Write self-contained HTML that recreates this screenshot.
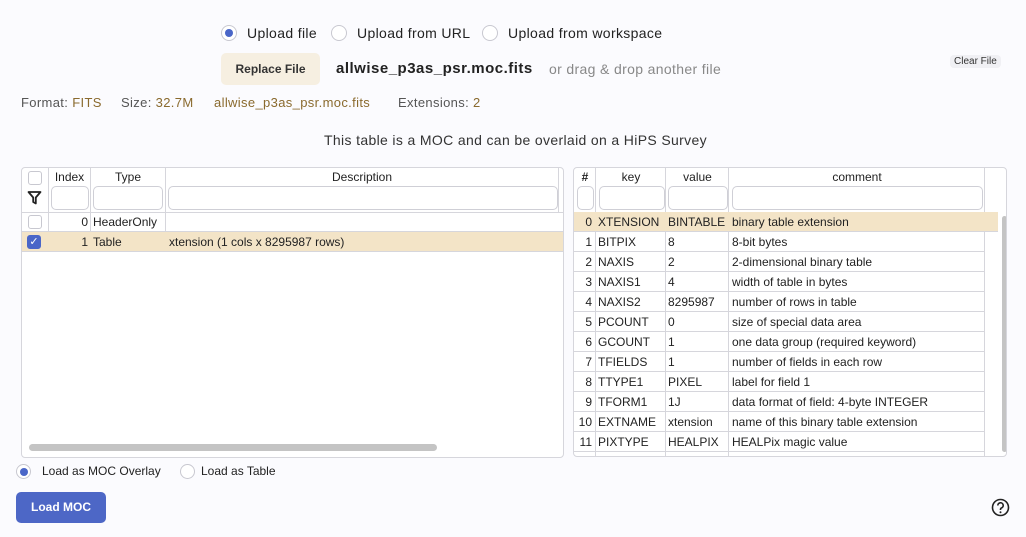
<!DOCTYPE html>
<html><head><meta charset="utf-8"><style>
*{box-sizing:border-box;margin:0;padding:0}
body{width:1026px;height:537px;background:#fbfbfe;font-family:"Liberation Sans",sans-serif;color:#222;position:relative;overflow:hidden}
.a{position:absolute;white-space:nowrap}
.radio{position:absolute;width:16px;height:16px;border:1px solid #c8c8d0;border-radius:50%;background:#fff}
.radio.on::after{content:"";position:absolute;left:3px;top:3px;width:8px;height:8px;border-radius:50%;background:#4a66c8}
.gold{color:#8a6a2e}
.tbl{position:absolute;border:1px solid #d6d6dc;border-radius:4px;background:#fff;overflow:hidden}
.hd{position:absolute;font-size:12px;text-align:center}
.inp{position:absolute;height:24px;border:1px solid #cfcfd6;border-radius:5px;background:#fff}
.cb{position:absolute;width:14px;height:14px;border:1px solid #c8c8d0;border-radius:3px;background:#fff}
.vl{position:absolute;top:0;bottom:0;width:1px;background:#d6d6dc}
.ls{letter-spacing:0.35px}
</style></head><body>
<div class="radio on" style="left:221px;top:25px"></div><div class="a ls" style="left:247px;top:25px;font-size:14px">Upload file</div>
<div class="radio" style="left:331px;top:25px"></div><div class="a ls" style="left:357px;top:25px;font-size:14px">Upload from URL</div>
<div class="radio" style="left:482px;top:25px"></div><div class="a ls" style="left:508px;top:25px;font-size:14px">Upload from workspace</div>
<div class="a" style="left:221px;top:53px;width:99px;height:32px;background:#f6efe1;border-radius:5px;font-size:12px;font-weight:bold;line-height:32px;text-align:center;color:#333">Replace File</div>
<div class="a" style="left:336px;top:60px;font-size:15px;font-weight:bold;letter-spacing:0.5px">allwise_p3as_psr.moc.fits</div>
<div class="a ls" style="left:549px;top:61px;font-size:14px;color:#888">or drag &amp; drop another file</div>
<div class="a" style="left:950px;top:55px;font-size:10px;background:#f0f0f4;border-radius:4px;padding:1px 4px;color:#333">Clear File</div>
<div class="a ls" style="left:21px;top:95px;font-size:13px;color:#555">Format: <span class="gold">FITS</span></div>
<div class="a ls" style="left:121px;top:95px;font-size:13px;color:#555">Size: <span class="gold">32.7M</span></div>
<div class="a gold ls" style="left:214px;top:95px;font-size:13px">allwise_p3as_psr.moc.fits</div>
<div class="a ls" style="left:398px;top:95px;font-size:13px;color:#555">Extensions: <span class="gold">2</span></div>
<div class="a ls" style="left:324px;top:132px;font-size:14px;color:#333">This table is a MOC and can be overlaid on a HiPS Survey</div>

<div class="tbl" style="left:21px;top:167px;width:543px;height:291px">
 <div class="vl" style="left:26px;height:84px"></div><div class="vl" style="left:68px;height:84px"></div><div class="vl" style="left:143px;height:84px"></div><div class="vl" style="left:536px;height:44px"></div>
 <div class="cb" style="left:6px;top:3px"></div>
 <svg class="a" style="left:5px;top:22px" width="15" height="15" viewBox="0 0 15 15"><path d="M1.5 2h12l-4.7 5.5v6l-2.6-1.5v-4.5z" fill="none" stroke="#222" stroke-width="1.8" stroke-linejoin="round"/></svg>
 <div class="hd" style="left:27px;top:2px;width:41px">Index</div>
 <div class="hd" style="left:69px;top:2px;width:74px">Type</div>
 <div class="hd" style="left:144px;top:2px;width:392px">Description</div>
 <div class="inp" style="left:29px;top:18px;width:38px"></div>
 <div class="inp" style="left:71px;top:18px;width:70px"></div>
 <div class="inp" style="left:146px;top:18px;width:390px"></div>
 <div style="position:absolute;left:0;right:0;top:44px;height:20px;border-top:1px solid #d6d6dc;border-bottom:1px solid #d6d6dc"></div>
 <div style="position:absolute;left:0;right:0;top:64px;height:20px;background:#f3e4c7;border-bottom:1px solid #d6d6dc"></div>
 <div class="cb" style="left:6px;top:47px"></div>
 <div class="cb" style="left:5px;top:67px;background:#4a66c8;border-color:#4a66c8;color:#fff;font-size:11px;line-height:12px;text-align:center">✓</div>
 <div class="a" style="left:27px;top:47px;width:39px;text-align:right;font-size:12px">0</div><div class="a" style="left:71px;top:47px;font-size:12px">HeaderOnly</div>
 <div class="a" style="left:27px;top:67px;width:39px;text-align:right;font-size:12px">1</div><div class="a" style="left:71px;top:67px;font-size:12px">Table</div><div class="a" style="left:147px;top:67px;font-size:12px">xtension (1 cols x 8295987 rows)</div>
 <div class="a" style="left:7px;top:276px;width:408px;height:7px;border-radius:4px;background:#c4c4c4"></div>
</div>

<div class="tbl" style="left:573px;top:167px;width:434px;height:290px">
 <div class="hd" style="left:0;top:2px;width:22px;font-weight:bold">#</div>
 <div class="hd" style="left:22px;top:2px;width:70px">key</div>
 <div class="hd" style="left:92px;top:2px;width:63px">value</div>
 <div class="hd" style="left:155px;top:2px;width:256px">comment</div>
 <div class="inp" style="left:3px;top:18px;width:17px"></div>
 <div class="inp" style="left:25px;top:18px;width:66px"></div>
 <div class="inp" style="left:94px;top:18px;width:60px"></div>
 <div class="inp" style="left:158px;top:18px;width:251px"></div>
 <div style="position:absolute;left:0;top:44px;width:411px;height:246px;border-top:1px solid #d6d6dc"></div>
 <div class="vl" style="left:21px"></div><div class="vl" style="left:91px"></div><div class="vl" style="left:154px"></div><div class="vl" style="left:410px"></div>
 <div class="a" style="left:428px;top:48px;width:5px;height:236px;background:#c4c4c4;border-radius:3px"></div>
 <div style="position:absolute;left:0;top:44px;width:424px;font-size:12px">
 <div style="height:20px;background:#f3e4c7;border-bottom:1px solid #d6d6dc;position:relative"><span class="a" style="left:0;width:18px;text-align:right;top:3px">0</span><span class="a" style="left:24px;top:3px">XTENSION</span><span class="a" style="left:94px;top:3px">BINTABLE</span><span class="a" style="left:158px;top:3px">binary table extension</span></div>
 </div>
 <div style="position:absolute;left:0;top:64px;width:411px;font-size:12px">
 <div style="height:20px;border-bottom:1px solid #d6d6dc;position:relative"><span class="a" style="width:18px;text-align:right;top:3px">1</span><span class="a" style="left:24px;top:3px">BITPIX</span><span class="a" style="left:94px;top:3px">8</span><span class="a" style="left:158px;top:3px">8-bit bytes</span></div>
 <div style="height:20px;border-bottom:1px solid #d6d6dc;position:relative"><span class="a" style="width:18px;text-align:right;top:3px">2</span><span class="a" style="left:24px;top:3px">NAXIS</span><span class="a" style="left:94px;top:3px">2</span><span class="a" style="left:158px;top:3px">2-dimensional binary table</span></div>
 <div style="height:20px;border-bottom:1px solid #d6d6dc;position:relative"><span class="a" style="width:18px;text-align:right;top:3px">3</span><span class="a" style="left:24px;top:3px">NAXIS1</span><span class="a" style="left:94px;top:3px">4</span><span class="a" style="left:158px;top:3px">width of table in bytes</span></div>
 <div style="height:20px;border-bottom:1px solid #d6d6dc;position:relative"><span class="a" style="width:18px;text-align:right;top:3px">4</span><span class="a" style="left:24px;top:3px">NAXIS2</span><span class="a" style="left:94px;top:3px">8295987</span><span class="a" style="left:158px;top:3px">number of rows in table</span></div>
 <div style="height:20px;border-bottom:1px solid #d6d6dc;position:relative"><span class="a" style="width:18px;text-align:right;top:3px">5</span><span class="a" style="left:24px;top:3px">PCOUNT</span><span class="a" style="left:94px;top:3px">0</span><span class="a" style="left:158px;top:3px">size of special data area</span></div>
 <div style="height:20px;border-bottom:1px solid #d6d6dc;position:relative"><span class="a" style="width:18px;text-align:right;top:3px">6</span><span class="a" style="left:24px;top:3px">GCOUNT</span><span class="a" style="left:94px;top:3px">1</span><span class="a" style="left:158px;top:3px">one data group (required keyword)</span></div>
 <div style="height:20px;border-bottom:1px solid #d6d6dc;position:relative"><span class="a" style="width:18px;text-align:right;top:3px">7</span><span class="a" style="left:24px;top:3px">TFIELDS</span><span class="a" style="left:94px;top:3px">1</span><span class="a" style="left:158px;top:3px">number of fields in each row</span></div>
 <div style="height:20px;border-bottom:1px solid #d6d6dc;position:relative"><span class="a" style="width:18px;text-align:right;top:3px">8</span><span class="a" style="left:24px;top:3px">TTYPE1</span><span class="a" style="left:94px;top:3px">PIXEL</span><span class="a" style="left:158px;top:3px">label for field 1</span></div>
 <div style="height:20px;border-bottom:1px solid #d6d6dc;position:relative"><span class="a" style="width:18px;text-align:right;top:3px">9</span><span class="a" style="left:24px;top:3px">TFORM1</span><span class="a" style="left:94px;top:3px">1J</span><span class="a" style="left:158px;top:3px">data format of field: 4-byte INTEGER</span></div>
 <div style="height:20px;border-bottom:1px solid #d6d6dc;position:relative"><span class="a" style="width:18px;text-align:right;top:3px">10</span><span class="a" style="left:24px;top:3px">EXTNAME</span><span class="a" style="left:94px;top:3px">xtension</span><span class="a" style="left:158px;top:3px">name of this binary table extension</span></div>
 <div style="height:20px;border-bottom:1px solid #d6d6dc;position:relative"><span class="a" style="width:18px;text-align:right;top:3px">11</span><span class="a" style="left:24px;top:3px">PIXTYPE</span><span class="a" style="left:94px;top:3px">HEALPIX</span><span class="a" style="left:158px;top:3px">HEALPix magic value</span></div>
 </div>
</div>

<div class="radio on" style="left:16px;top:464px;width:15px;height:15px"></div><div class="a" style="left:42px;top:464px;font-size:12px">Load as MOC Overlay</div>
<div class="radio" style="left:180px;top:464px;width:15px;height:15px"></div><div class="a" style="left:201px;top:464px;font-size:12px">Load as Table</div>
<div class="a" style="left:16px;top:492px;width:90px;height:31px;background:#4d67c6;border-radius:5px;color:#fff;font-size:12px;font-weight:bold;line-height:31px;text-align:center">Load MOC</div>
<svg class="a" style="left:991px;top:498px" width="19" height="19" viewBox="0 0 19 19"><circle cx="9.5" cy="9.5" r="8" fill="none" stroke="#222" stroke-width="1.6"/><path d="M6.8 7.5a2.7 2.7 0 1 1 3.6 2.5c-.7.3-.9.8-.9 1.5v.5" fill="none" stroke="#222" stroke-width="1.6"/><circle cx="9.5" cy="14.2" r="1" fill="#222"/></svg>
</body></html>
